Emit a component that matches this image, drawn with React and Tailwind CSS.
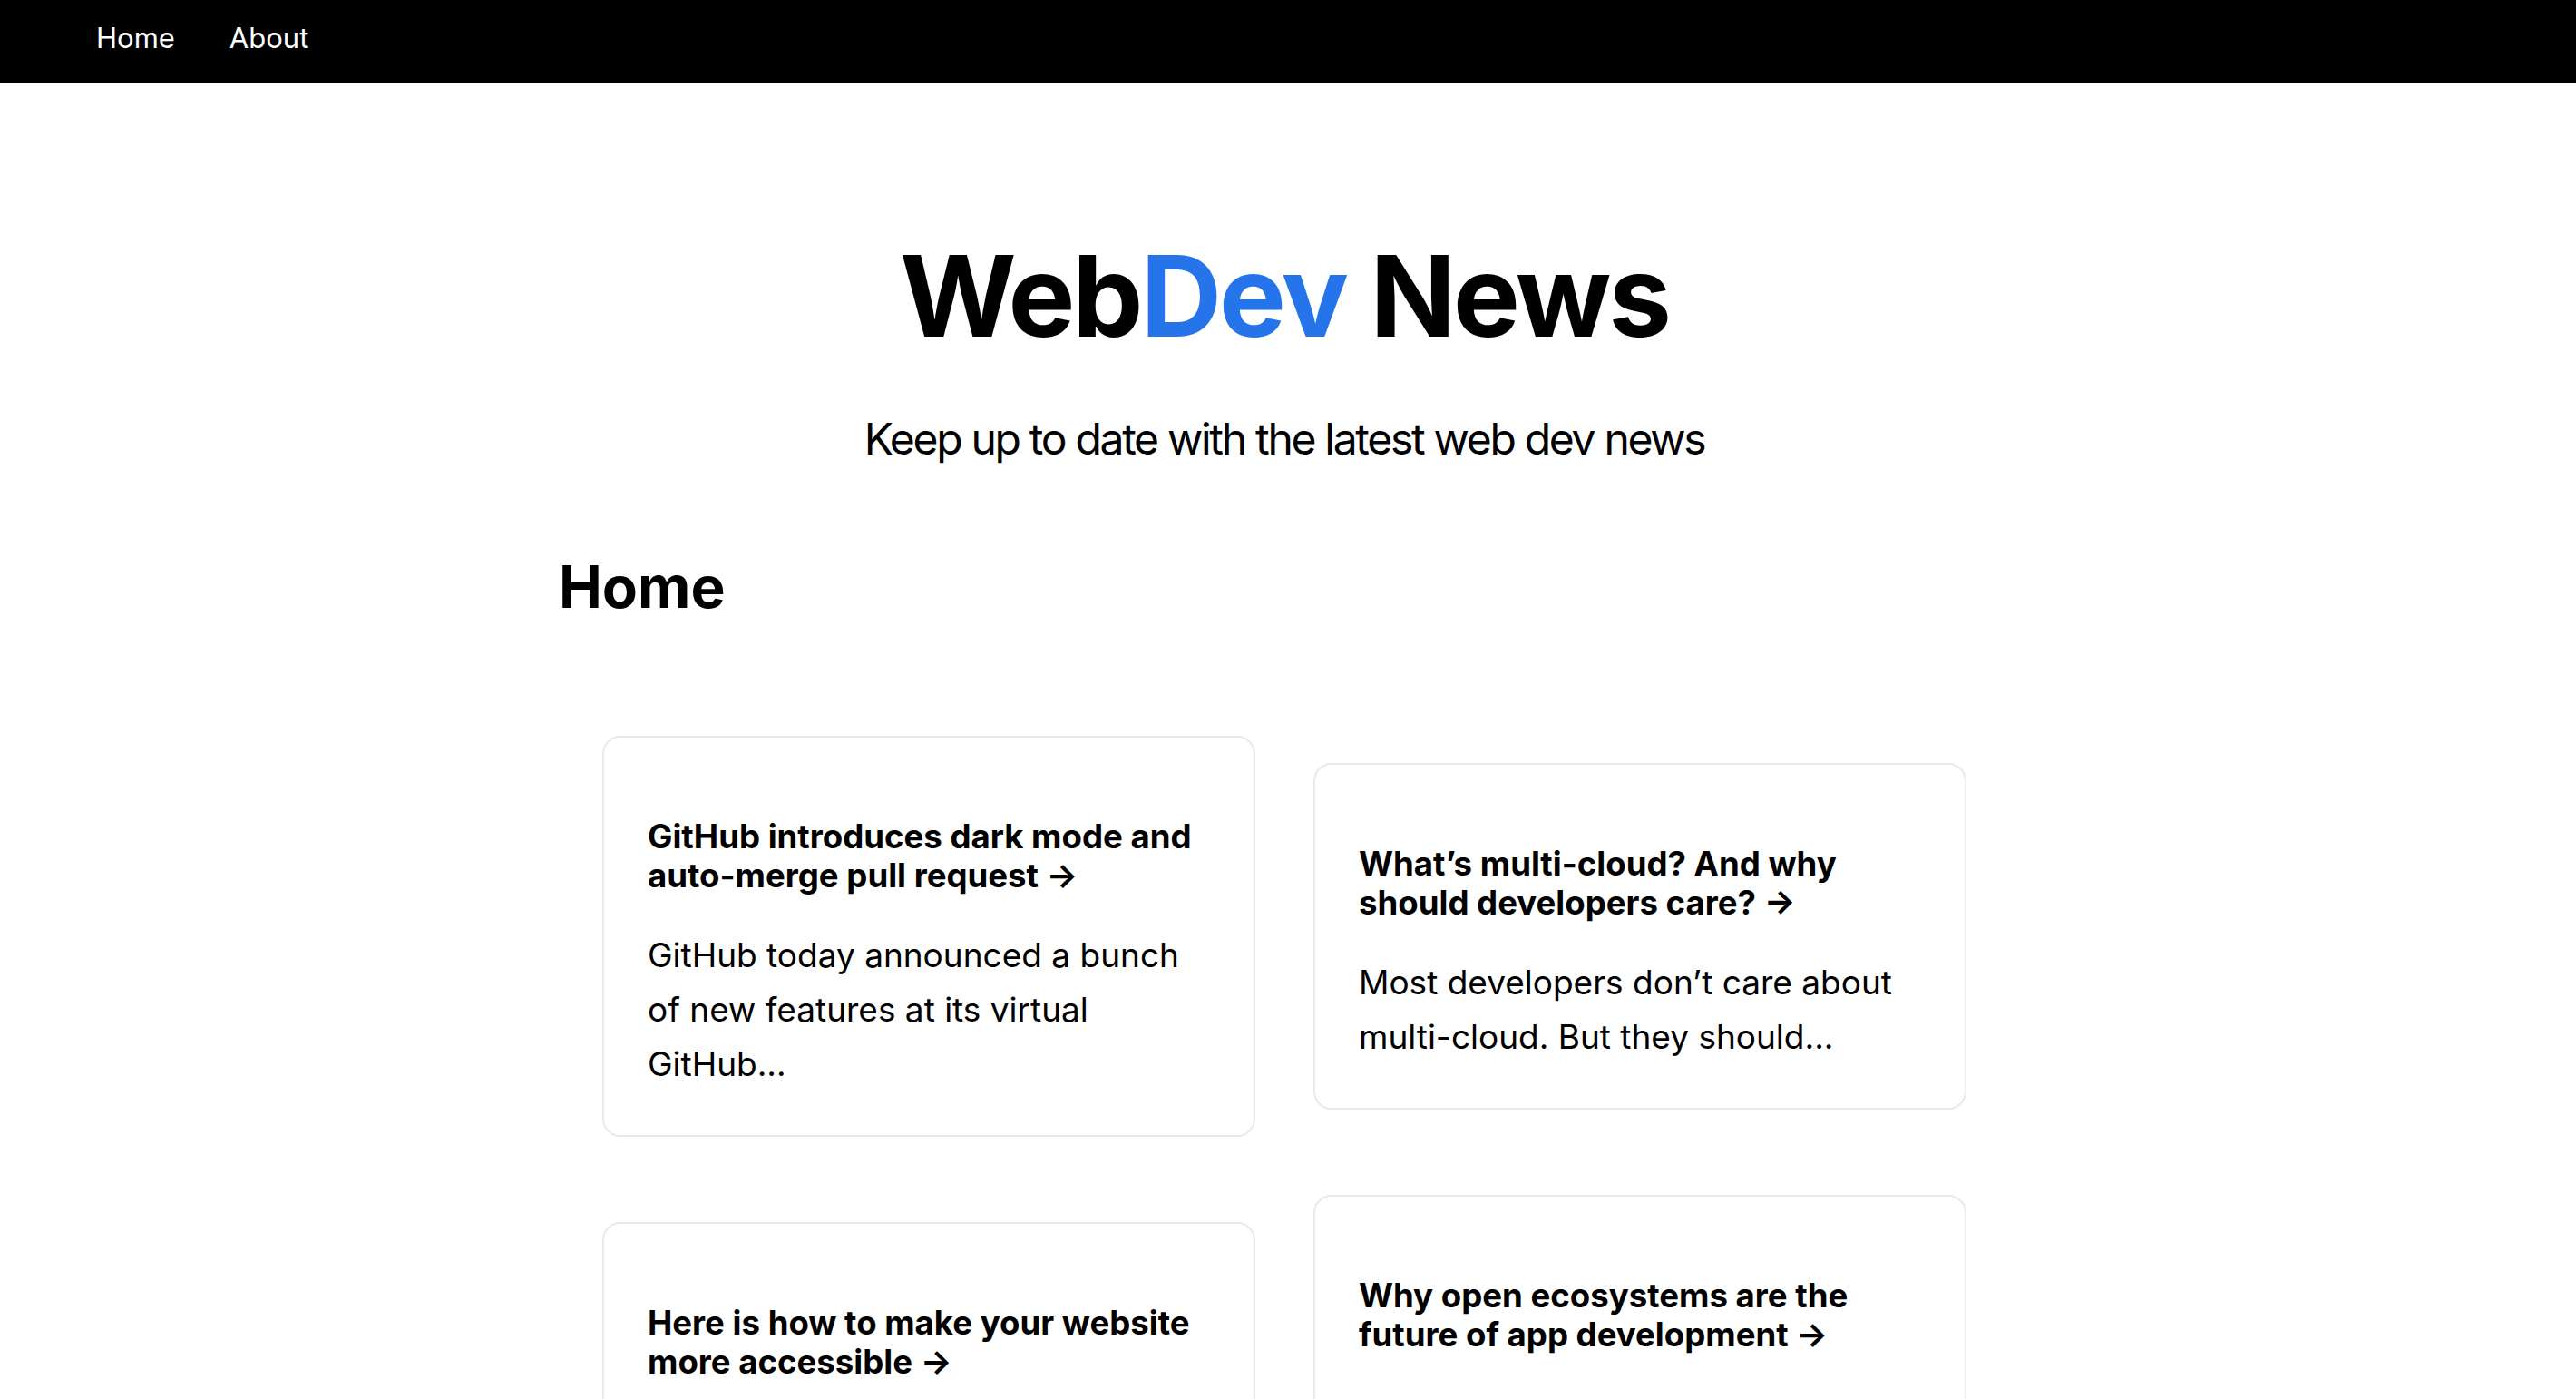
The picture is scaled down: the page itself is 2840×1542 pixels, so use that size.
const POSTS = [
  {
    title: 'GitHub introduces dark mode and auto-merge pull request',
    excerpt: 'GitHub today announced a bunch of new features at its virtual GitHub...',
  },
  {
    title: 'What’s multi-cloud? And why should developers care?',
    excerpt: 'Most developers don’t care about multi-cloud. But they should...',
  },
  {
    title: 'Here is how to make your website more accessible',
    excerpt: 'Simple steps that make the web usable for everyone...',
  },
  {
    title: 'Why open ecosystems are the future of app development',
    excerpt: 'Developers build faster on open platforms. Here is why that matters...',
  },
]

function Nav() {
  return (
    <nav className="h-[91px] bg-black flex items-center pb-[6px] pl-[106px] gap-[60px] text-[31px] text-white">
      <a href="#">Home</a>
      <a href="#">About</a>
    </nav>
  )
}

function PostCard({ post }) {
  return (
    <a
      href="#"
      className="block w-[720px] m-[32px] p-[48px] border-2 border-[#eaeaea] rounded-[20px] text-black"
    >
      <h3 className="mt-[40px] mb-[35px] text-[36.6px] leading-[43.5px] font-bold">
        {post.title} &rarr;
      </h3>
      <p className="text-[37px] leading-[60px]">{post.excerpt}</p>
    </a>
  )
}

export default function App() {
  return (
    <div className="min-h-screen bg-white text-black font-['Inter','Liberation_Sans',sans-serif]">
      <Nav />
      <main className="flex flex-col items-center pr-[8px] pt-[164px] pb-[80px]">
        <h1 className="text-[124px] leading-[1.15] font-bold tracking-[-3px]">
          Web<span className="text-[#2574e9]">Dev</span> News
        </h1>
        <p className="mt-[50px] text-[48px] leading-[72px] tracking-[-2.3px]">
          Keep up to date with the latest web dev news
        </p>

        <section className="w-[1600px] mt-[88px]">
          <h2 className="text-[64px] leading-[77px] font-bold">Home</h2>
          <div className="mt-[94px] flex flex-wrap items-center justify-center">
            {POSTS.map(p => (
              <PostCard key={p.title} post={p} />
            ))}
          </div>
        </section>
      </main>
    </div>
  )
}
